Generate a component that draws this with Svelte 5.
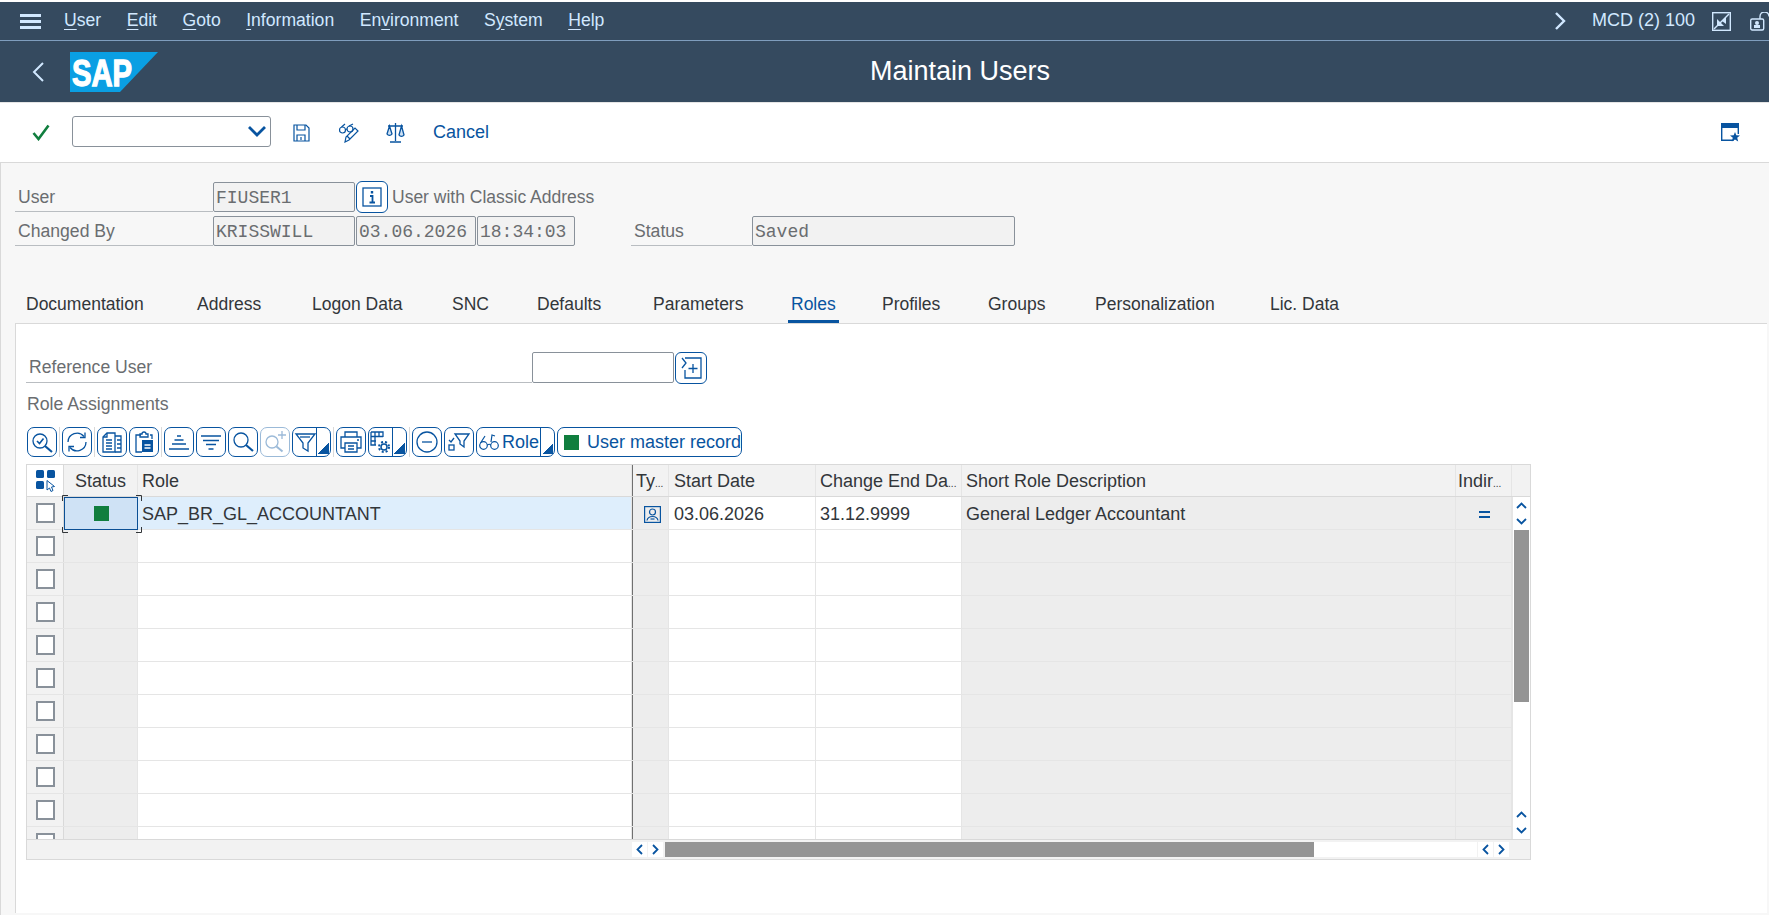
<script>
  const menus = [
    { pre: '', key: 'U', post: 'ser' },
    { pre: '', key: 'E', post: 'dit' },
    { pre: '', key: 'G', post: 'oto' },
    { pre: '', key: 'I', post: 'nformation' },
    { pre: 'En', key: 'v', post: 'ironment' },
    { pre: 'S', key: 'y', post: 'stem' },
    { pre: '', key: 'H', post: 'elp' }
  ]

  const tabs = ['Documentation', 'Address', 'Logon Data', 'SNC', 'Defaults', 'Parameters', 'Roles', 'Profiles', 'Groups', 'Personalization', 'Lic. Data']
  const activeTab = 'Roles'

  const icons = {
    check: '<circle cx="11" cy="12" r="7"/><path d="M16 17l7 6" stroke-width="2.2"/><path d="M8 12l2.5 2.5 4-5" stroke-width="1.6"/>',
    refresh: '<path d="M4 13a9 9 0 0 1 16-5.5"/><path d="M21 3.5v5h-5"/><path d="M22 13a9 9 0 0 1-16 5.5"/><path d="M5 22.500v-5h5"/>',
    copy: '<path d="M4 8l4-4h8v19H4z"/><path d="M8 4v4H4"/><path d="M7 11h6M7 14h6M7 17h6M7 20h6"/><path d="M16 7h6v16h-6M18 11h4M18 15h4M18 19h4"/>',
    paste: '<path d="M10 6H5v17h6"/><path d="M9 8V5h2a2 2 0 0 1 4 0h2v3z"/><path d="M19 6h2v4"/><rect x="11" y="11" width="11" height="12" fill="#0854a0" stroke="none"/><path d="M13.500 16h6M13.500 19h6" stroke="#fff"/>',
    pyramid: '<path d="M11 7h4M8.500 11h9M6 15h14M3 20h20"/>',
    funnelLines: '<path d="M3 7h20M5 11.500h16M8 15.500h10M10.500 20h5"/>',
    search: '<circle cx="11" cy="11" r="7"/><path d="M16 16l7 6" stroke-width="2.200"/>',
    zoomPlus: '<circle cx="10" cy="13" r="6"/><path d="M14.500 17.500l6 5" stroke-width="2"/><path d="M20 2v8M16 6h8"/>',
    filter: '<path d="M2 5h19l-7 9v8l-5-3v-5z"/><path d="M6 8h10"/>',
    print: '<path d="M7 8V3h12v5"/><path d="M7 19H3V8h20v11h-4"/><path d="M7 14h12v9H7z"/><path d="M10 17h6M10 20h6"/><path d="M19 11h2"/>',
    layout: '<path d="M1 3h12v5M1 3v13h5M1 7.500h12M1 12h5M5 3v13M9 3v5"/><circle cx="14" cy="18" r="3" stroke-width="1.500"/><circle cx="14" cy="18" r="5" stroke-width="2" stroke-dasharray="2 2"/>',
    minus: '<circle cx="13" cy="13" r="10"/><path d="M8 13h10"/>',
    filterSel: '<path d="M3 11l2 2 3-4"/><rect x="3" y="16" width="5" height="5"/><path d="M9 5h14l-5 7v6l-4-3v-3z"/>',
    add: '<path d="M7 3h16v20H7v-8"/><path d="M4 3l4 5-4 5" /><path d="M15 9v9M10.500 13.500h9"/>'
  }

  const tools = [
    { icon: 'check' }, { sep: true },
    { icon: 'refresh' }, { sep: true },
    { icon: 'copy' }, { icon: 'paste' }, { sep: true },
    { icon: 'pyramid' }, { icon: 'funnelLines' }, { icon: 'search' },
    { icon: 'zoomPlus', disabled: true },
    { icon: 'filter', split: true }, { sep: true },
    { icon: 'print' },
    { icon: 'layout', split: true }, { sep: true },
    { icon: 'minus' }, { icon: 'filterSel' }
  ]

  const columns = [
    { key: 'sel', label: '', width: 37 },
    { key: 'status', label: 'Status', width: 74 },
    { key: 'role', label: 'Role', width: 494 },
    { key: 'ty', label: 'Ty', width: 37, ro: true, cut: true },
    { key: 'start', label: 'Start Date', width: 147 },
    { key: 'end', label: 'Change End Da', width: 146, cut: true },
    { key: 'short', label: 'Short Role Description', width: 494, ro: true },
    { key: 'indir', label: 'Indir', width: 56, ro: true, cut: true }
  ]

  const rows = Array.from({ length: 11 }, (_, i) => i)
</script>

<div class="page">
  <header class="shell">
    <svg class="burger" width="21" height="15" viewBox="0 0 21 15" fill="#d1e8ff"><rect width="21" height="3"/><rect y="6" width="21" height="3"/><rect y="12" width="21" height="3"/></svg>
    <nav class="menu">
      {#each menus as m}
        <span>{m.pre}<u>{m.key}</u>{m.post}</span>
      {/each}
    </nav>
    <div class="shell-right">
      <svg width="12" height="18" viewBox="0 0 12 18" fill="none" stroke="#d1e8ff" stroke-width="2.400"><path d="M2 1l8 8-8 8"/></svg>
      <span class="sysinfo">MCD (2) 100</span>
      <svg width="19" height="19" viewBox="0 0 19 19" fill="none" stroke="#d1e8ff" stroke-width="1.400"><rect x=".7" y=".7" width="17.600" height="17.600"/><path d="M2 17L17 2"/><path d="M5 7v7h7z" fill="#d1e8ff" stroke="none"/><path d="M14 5v7l-4-3z" fill="#d1e8ff" stroke="none"/></svg>
      <svg class="lock" width="19" height="19" viewBox="0 0 19 19" fill="none" stroke="#d1e8ff" stroke-width="1.400"><rect x=".7" y="7" width="13" height="11" rx="1.500"/><path d="M10 7V4.500a4.500 4.500 0 0 1 9 0"/><circle cx="7" cy="11" r="2" fill="#d1e8ff" stroke="none"/><rect x="4" y="13" width="6" height="3" fill="#d1e8ff" stroke="none"/></svg>
    </div>
  </header>

  <div class="titlebar">
    <svg class="back" width="13" height="20" viewBox="0 0 13 20" fill="none" stroke="#d1e8ff" stroke-width="2"><path d="M11 1L2 10l9 9"/></svg>
    <svg class="logo" width="88" height="40" viewBox="0 0 88 40">
      <polygon points="0,0 88,0 50,40 0,40" fill="#0a9fe3"/>
      <text x="2" y="34" fill="#fff" stroke="#fff" stroke-width="1.300" font-family="Liberation Sans" font-weight="700" font-size="37" textLength="60" lengthAdjust="spacingAndGlyphs">SAP</text>
    </svg>
    <h1>Maintain Users</h1>
  </div>

  <div class="tools">
    <svg class="okay" width="18" height="17" viewBox="0 0 18 17" fill="none" stroke="#107e3e" stroke-width="2.600"><path d="M1.500 9l5 6L16.500 1.500"/></svg>
    <div class="cmd">
      <svg width="20" height="12" viewBox="0 0 20 12" fill="none" stroke="#0854a0" stroke-width="2.800"><path d="M2 2l8 8 8-8"/></svg>
    </div>
    <svg class="tb-icon first" width="18" height="18" viewBox="0 0 18 18" fill="none" stroke="#0854a0" stroke-width="1.200"><path d="M2 1h12l3 3v13H2z"/><path d="M5 1v5h8V1"/><path d="M5 17v-6h8v6"/><path d="M9 13v3"/></svg>
    <svg class="tb-icon second" width="20" height="20" viewBox="0 0 20 20" fill="none" stroke="#0854a0" stroke-width="1.200"><circle cx="3.500" cy="7" r="3"/><circle cx="11" cy="6" r="3"/><path d="M2.500 4L6 1M10 3l4-2M6.500 6.500l1.500-.5"/><path d="M6 19l1-5 9-9 3 3-9 9z"/><path d="M8 13l3 3"/></svg>
    <svg class="tb-icon" width="19" height="21" viewBox="0 0 19 21" fill="none" stroke="#0854a0" stroke-width="1.300"><path d="M9.500 1v18M4 20h11M2 4h15"/><path d="M3.500 4L1 12a3 3 0 0 0 5 0zM15.500 4L13 13a3 3 0 0 0 5 0z" fill="#cfe2f5"/></svg>
    <span class="cancel">Cancel</span>
    <svg class="favorite" width="20" height="19" viewBox="0 0 20 19" fill="none"><path d="M.7 4v13.300h12M17.300 4v7" stroke="#0854a0" stroke-width="1.400"/><rect width="18" height="5" fill="#0854a0"/><polygon points="14,9 15.300,12.300 19,12.500 16.200,14.800 17.200,18.500 14,16.500 10.800,18.500 11.800,14.800 9,12.500 12.700,12.300" fill="#0854a0"/></svg>
  </div>

  <main class="main">
    <section class="form">
      <div class="form-row">
        <span class="lbl">User</span>
        <span class="field f-id">FIUSER1</span>
        <button class="ibtn info" aria-label="Info">
          <svg width="20" height="20" viewBox="0 0 20 20" fill="none" stroke="#0854a0"><rect x="1" y="1" width="18" height="18" stroke-width="1.300"/><path d="M10 4v2.500" stroke-width="2.400"/><path d="M8 9h2.500v6M7.500 15.500h5.500" stroke-width="1.800"/></svg>
        </button>
        <span class="plain">User with Classic Address</span>
      </div>
      <div class="form-row">
        <span class="lbl">Changed By</span>
        <span class="field f-id">KRISSWILL</span>
        <span class="field f-date">03.06.2026</span>
        <span class="field f-time">18:34:03</span>
        <span class="lbl lbl-status">Status</span>
        <span class="field f-status">Saved</span>
      </div>
    </section>

    <div class="tabs">
      {#each tabs as tab}
        <span class="tab" class:active={tab === activeTab}>{tab}</span>
      {/each}
    </div>

    <section class="panel">
      <div class="ref-row">
        <span class="lbl lbl-ref">Reference User</span>
        <span class="field f-ref"></span>
        <button class="ibtn add" aria-label="Add">
          <svg width="26" height="26" viewBox="0 0 26 26" fill="none" stroke="#0854a0" stroke-width="1.300">{@html icons.add}</svg>
        </button>
      </div>
      <h2>Role Assignments</h2>

      <div class="alv-tools">
        {#each tools as t}
          {#if t.sep}
            <i class="sep"></i>
          {:else}
            <button class="tbtn" class:split={t.split} class:off={t.disabled} aria-label={t.icon}>
              <svg width="26" height="26" viewBox="0 0 26 26" fill="none" stroke="#0854a0" stroke-width="1.300">{@html icons[t.icon]}</svg>
              {#if t.split}<span class="arrow"></span>{/if}
            </button>
          {/if}
        {/each}
        <button class="tbtn split wide-role">
          <svg width="20" height="18" viewBox="0 0 20 18" fill="none" stroke="#0854a0" stroke-width="1.200"><circle cx="4.500" cy="12.500" r="3.800"/><circle cx="15.500" cy="12.500" r="3.800"/><path d="M8.300 12q2-1.500 3.400 0"/><path d="M1.500 10L6 3M12 9l1-7 3 1"/></svg>
          <span class="tbtn-text">Role</span>
          <span class="arrow"></span>
        </button>
        <button class="tbtn wide-master">
          <i class="led"></i>
          <span class="tbtn-text">User master record</span>
        </button>
      </div>

      <div class="alv">
        <div class="alv-head">
          {#each columns as c}
            <div class="hcell c-{c.key}" style="width:{c.width}px">
              {#if c.key === 'sel'}
                <svg width="22" height="23" viewBox="0 0 22 23"><g fill="#0854a0"><rect x="1" y="1" width="8" height="8" rx="1.500"/><rect x="12" y="1" width="8" height="8" rx="1.500"/><rect x="1" y="12" width="8" height="8" rx="1.500"/></g><path d="M12 11.500l7.500 6-3 .5 1.500 3.500-2 1-1.500-3.500-2.500 2z" fill="#fff" stroke="#0854a0"/></svg>
              {:else}
                {c.label}{#if c.cut}<small>...</small>{/if}
              {/if}
            </div>
          {/each}
          <div class="hcell head-fill"></div>
        </div>

        <div class="alv-mid">
          <div class="alv-body">
            {#each rows as r}
              <div class="row" class:cut={r === 10} class:selected={r === 0}>
                {#each columns as c}
                  <div class="cell c-{c.key}" class:ro={c.ro || c.key === 'status'} style="width:{c.width}px">
                    {#if c.key === 'sel'}
                      <span class="checkbox"></span>
                    {:else if r === 0}
                      {#if c.key === 'status'}
                        <i class="led"></i>
                        <svg class="focus" width="80" height="38" viewBox="0 0 80 38" fill="none" stroke="#32363a" stroke-width="1"><path d="M.5 6V.5H6M74 .5h5.500V6M79.500 32v5.500H74M6 37.500H.5V32"/></svg>
                      {:else if c.key === 'role'}
                        SAP_BR_GL_ACCOUNTANT
                      {:else if c.key === 'ty'}
                        <svg width="17" height="17" viewBox="0 0 17 17" fill="none" stroke="#0854a0" stroke-width="1.200"><rect x=".6" y=".6" width="15.800" height="15.800"/><circle cx="8.500" cy="6" r="3"/><path d="M3 14.500c.5-3 2.500-4 5.500-4s5 1 5.500 4"/><path d="M6.500 13h4"/></svg>
                      {:else if c.key === 'start'}
                        03.06.2026
                      {:else if c.key === 'end'}
                        31.12.9999
                      {:else if c.key === 'short'}
                        General Ledger Accountant
                      {:else if c.key === 'indir'}
                        <span class="equal"></span>
                      {/if}
                    {/if}
                  </div>
                {/each}
              </div>
            {/each}
          </div>
          <div class="vscroll">
            <span class="sbtn"><svg width="11" height="7" viewBox="0 0 11 7" fill="none" stroke="#0854a0" stroke-width="1.800"><path d="M1 6l4.500-4.500L10 6"/></svg></span>
            <span class="sbtn"><svg width="11" height="7" viewBox="0 0 11 7" fill="none" stroke="#0854a0" stroke-width="1.800"><path d="M1 1l4.500 4.500L10 1"/></svg></span>
            <span class="vthumb"></span>
            <span class="vtrack"></span>
            <span class="sbtn"><svg width="11" height="7" viewBox="0 0 11 7" fill="none" stroke="#0854a0" stroke-width="1.800"><path d="M1 6l4.500-4.500L10 6"/></svg></span>
            <span class="sbtn"><svg width="11" height="7" viewBox="0 0 11 7" fill="none" stroke="#0854a0" stroke-width="1.800"><path d="M1 1l4.500 4.500L10 1"/></svg></span>
          </div>
        </div>

        <div class="alv-foot">
          <span class="sbtn"><svg width="7" height="11" viewBox="0 0 7 11" fill="none" stroke="#0854a0" stroke-width="1.800"><path d="M6 1L1.500 5.500 6 10"/></svg></span>
          <span class="sbtn"><svg width="7" height="11" viewBox="0 0 7 11" fill="none" stroke="#0854a0" stroke-width="1.800"><path d="M1 1l4.500 4.500L1 10"/></svg></span>
          <div class="htrack"><span class="hthumb"></span></div>
          <span class="sbtn"><svg width="7" height="11" viewBox="0 0 7 11" fill="none" stroke="#0854a0" stroke-width="1.800"><path d="M6 1L1.500 5.500 6 10"/></svg></span>
          <span class="sbtn"><svg width="7" height="11" viewBox="0 0 7 11" fill="none" stroke="#0854a0" stroke-width="1.800"><path d="M1 1l4.500 4.500L1 10"/></svg></span>
        </div>
      </div>
    </section>
  </main>
</div>

<style>
  :global(body) {
    margin: 0;
    background: #fff;
  }
  .page {
    width: 1769px;
    height: 915px;
    overflow: hidden;
    display: flex;
    flex-direction: column;
    font-family: "Liberation Sans", Arial, sans-serif;
    font-size: 18px;
    color: #32363a;
  }

  .shell {
    margin-top: 2px;
    height: 38px;
    flex: none;
    display: flex;
    align-items: center;
    background: #354a5f;
    border-bottom: 1px solid #7f9dbd;
    padding-left: 20px;
    color: #d1e8ff;
  }
  .burger {
    flex: none;
  }
  .menu {
    display: flex;
    gap: 25.5px;
    margin-left: 23px;
    padding-bottom: 2px;
    font-size: 17.6px;
  }
  .menu u {
    text-underline-offset: 3px;
  }
  .shell-right {
    margin-left: auto;
    display: flex;
    align-items: center;
    height: 100%;
  }
  .sysinfo {
    font-size: 18px;
    margin: 0 19px 0 26px;
    padding-bottom: 2px;
    width: 101px;
    white-space: nowrap;
  }
  .lock {
    margin-left: 19px;
  }

  .titlebar {
    height: 61px;
    flex: none;
    display: flex;
    align-items: center;
    background: #354a5f;
    padding-left: 32px;
  }
  .titlebar h1 {
    flex: 1;
    margin: 0 0 0 -4px;
    text-align: center;
    font-size: 27px;
    font-weight: 400;
    color: #fff;
  }
  .logo {
    margin-left: 25px;
    margin-right: -3px;
    overflow: visible;
  }
  .back,
  .logo {
    flex: none;
  }

  .tools {
    height: 61px;
    flex: none;
    box-sizing: border-box;
    display: flex;
    align-items: center;
    padding-left: 32px;
    border-bottom: 1px solid #d9d9d9;
    border-top: 1px solid #e5e5e5;
  }
  .cmd {
    width: 199px;
    height: 31px;
    box-sizing: border-box;
    margin: -3px 0 0 22px;
    border: 1px solid #89919a;
    border-radius: 3px;
    display: flex;
    align-items: center;
    justify-content: flex-end;
    padding-right: 3px;
  }
  .tb-icon {
    flex: none;
    margin-left: 27px;
  }
  .tb-icon.first {
    margin-left: 21px;
  }
  .tb-icon.second {
    margin-left: 29px;
  }
  .cancel {
    margin-left: 28px;
    color: #0854a0;
    font-size: 18px;
  }
  .favorite {
    margin-left: auto;
    margin-right: 28px;
  }

  .main {
    flex: 1;
    display: flex;
    flex-direction: column;
    background: #f7f7f7;
    border-left: 1px solid #d9d9d9;
    min-height: 0;
  }
  .form {
    padding: 19px 0 0 14px;
    display: flex;
    flex-direction: column;
    gap: 4px;
  }
  .form-row {
    height: 30px;
    display: flex;
    align-items: stretch;
  }
  .lbl {
    width: 198px;
    box-sizing: border-box;
    padding-left: 3px;
    line-height: 30px;
    font-size: 17.6px;
    border-bottom: 1px solid #b9bdc1;
    color: #6a6d70;
  }
  .lbl-status {
    width: 121px;
    margin-left: 56px;
  }
  .field {
    box-sizing: border-box;
    border: 1px solid #89919a;
    border-radius: 2px;
    background: #f2f2f2;
    font-family: "Liberation Mono", monospace;
    color: #6a6d70;
    line-height: 30px;
    padding-left: 2px;
  }
  .f-id {
    width: 142px;
    margin-right: 1px;
  }
  .f-date {
    width: 120px;
    margin-right: 1px;
  }
  .f-time {
    width: 98px;
  }
  .f-status {
    width: 263px;
  }
  .ibtn {
    box-sizing: border-box;
    padding: 0;
    background: #fff;
    border: 1px solid #0854a0;
    border-radius: 6px;
    display: flex;
    align-items: center;
    justify-content: center;
  }
  .info {
    width: 32px;
    height: 32px;
    margin: -1px 4px 0 0;
  }
  .plain {
    line-height: 30px;
    font-size: 17.5px;
    color: #6a6d70;
  }

  .tabs {
    margin-top: 39px;
    height: 38px;
    flex: none;
    display: grid;
    grid-template-columns: 171px 115px 140px 85px 116px 138px 91px 106px 107px 175px auto;
    justify-items: start;
    padding-left: 22px;
    font-size: 17.5px;
  }
  .tab {
    box-sizing: border-box;
    height: 38px;
    padding: 0 3px;
    line-height: 38px;
    color: #32363a;
  }
  .tab.active {
    color: #0854a0;
    border-bottom: 3px solid #0854a0;
  }

  .panel {
    flex: 1;
    box-sizing: border-box;
    margin: 0 2px 2px 14px;
    background: #fff;
    border-left: 1px solid #d9d9d9;
    border-top: 1px solid #d9d9d9;
    padding: 28px 0 0 10px;
    min-height: 0;
  }
  .ref-row {
    height: 31px;
    display: flex;
    align-items: stretch;
  }
  .lbl-ref {
    width: 506px;
    padding-left: 3px;
    line-height: 30px;
  }
  .f-ref {
    width: 142px;
    background: #fff;
    margin-right: 1px;
  }
  .add {
    width: 32px;
    height: 32px;
  }
  .panel h2 {
    margin: 8px 0 0 1px;
    height: 26px;
    font-size: 17.7px;
    font-weight: 400;
    line-height: 26px;
    color: #6a6d70;
  }

  .alv-tools {
    margin: 10px 0 0 1px;
    height: 30px;
    display: flex;
    align-items: stretch;
    gap: 2px;
  }
  .sep {
    width: 1px;
    background: #d9d9d9;
  }
  .tbtn {
    width: 30px;
    box-sizing: border-box;
    padding: 0;
    position: relative;
    background: #fff;
    border: 1px solid #0854a0;
    border-radius: 7px;
    display: flex;
    align-items: center;
    justify-content: center;
    font: inherit;
    color: #0854a0;
    white-space: nowrap;
  }
  .tbtn.off {
    opacity: 0.4;
  }
  .tbtn.split {
    width: 39px;
    justify-content: flex-start;
    padding-left: 1px;
  }
  .arrow {
    position: absolute;
    top: 0;
    bottom: 0;
    right: 0;
    width: 13px;
    border-left: 1px solid #0854a0;
    background: linear-gradient(to bottom right, transparent 50%, #0854a0 50%) no-repeat right 1px bottom 2px / 11px 11px;
  }
  .wide-role.split {
    width: 79px;
    padding-left: 2px;
    gap: 3px;
  }
  .wide-master {
    width: 185px;
    justify-content: flex-start;
    padding-left: 6px;
  }
  .wide-master .tbtn-text {
    margin-left: 8px;
  }
  .led {
    display: block;
    flex: none;
    width: 15px;
    height: 15px;
    background: #107e3e;
  }

  .alv {
    margin: 7px 0 0 0;
    width: 1505px;
    box-sizing: border-box;
    border: 1px solid #d9d9d9;
    background: #f2f2f2;
  }
  .alv-head {
    height: 31px;
    display: flex;
    border-bottom: 1px solid #d9d9d9;
  }
  .hcell {
    box-sizing: border-box;
    flex: none;
    padding-left: 4px;
    line-height: 33px;
    white-space: nowrap;
    overflow: hidden;
    border-right: 1px solid #e5e5e5;
    background: #f2f2f2;
  }
  .hcell small {
    font-size: 10px;
  }
  .hcell.c-sel {
    background: #fff;
    padding: 4px 0 0 8px;
    border-right-color: #d9d9d9;
  }
  .hcell.c-status {
    padding-left: 11px;
  }
  .hcell.c-indir {
    padding-left: 2px;
  }
  .hcell.c-start,
  .cell.c-start {
    padding-left: 5px;
  }
  .head-fill {
    flex: 1;
    border-right: 0;
  }
  .c-ty {
    border-left: 1px solid #707070;
    padding-left: 3px;
  }

  .alv-mid {
    display: flex;
    height: 342px;
  }
  .alv-body {
    width: 1485px;
    flex: none;
    background: #fff;
  }
  .row {
    height: 33px;
    display: flex;
    box-sizing: border-box;
    border-bottom: 1px solid #e5e5e5;
  }
  .row.cut {
    height: 12px;
    overflow: hidden;
    border-bottom: 0;
  }
  .cell {
    box-sizing: border-box;
    flex: none;
    height: 100%;
    padding: 2px 0 0 4px;
    white-space: nowrap;
    border-right: 1px solid #e5e5e5;
    display: flex;
    align-items: center;
  }
  .cell.ro {
    background: #ededed;
  }
  .cell.c-sel {
    background: #f2f2f2;
    padding: 0;
    justify-content: center;
    border-right-color: #d9d9d9;
    align-items: flex-start;
  }
  .cell.c-ty {
    padding-left: 11px;
  }
  .cell.c-indir {
    justify-content: flex-end;
    padding-right: 21px;
  }
  .checkbox {
    display: block;
    box-sizing: border-box;
    width: 19px;
    height: 20px;
    margin-top: 6px;
    background: #fff;
    border: 2px solid #89919a;
  }
  .row.selected .cell.c-role {
    background: #deeefc;
  }
  .row.selected .cell.c-status {
    position: relative;
    background: #cfe2f5;
    border: 1px solid #0b4f94;
    justify-content: center;
    padding: 0;
    height: 33px;
  }
  .focus {
    position: absolute;
    left: -3px;
    top: -3px;
    z-index: 1;
  }
  .equal {
    display: block;
    width: 11px;
    height: 3px;
    border-top: 2px solid #0854a0;
    border-bottom: 2px solid #0854a0;
  }

  .vscroll {
    flex: 1;
    display: flex;
    flex-direction: column;
    align-items: center;
    background: #fff;
    border-left: 1px solid #e5e5e5;
    padding-bottom: 1px;
    box-sizing: border-box;
  }
  .sbtn {
    flex: none;
    width: 16px;
    height: 16px;
    background: #fff;
    display: flex;
    align-items: center;
    justify-content: center;
  }
  .vthumb {
    width: 15px;
    height: 172px;
    margin-top: 1px;
    background: #949494;
    flex: none;
  }
  .vtrack {
    flex: 1;
  }

  .alv-foot {
    height: 20px;
    box-sizing: border-box;
    display: flex;
    align-items: center;
    padding: 0 20px 0 605px;
    border-top: 1px solid #d9d9d9;
  }
  .alv-foot .sbtn {
    height: 15px;
    border-right: 1px solid #f2f2f2;
    box-sizing: border-box;
  }
  .htrack {
    flex: 1;
    height: 15px;
    margin: 0 1px;
    background: #fff;
  }
  .hthumb {
    display: block;
    width: 649px;
    height: 100%;
    background: #949494;
  }
</style>
